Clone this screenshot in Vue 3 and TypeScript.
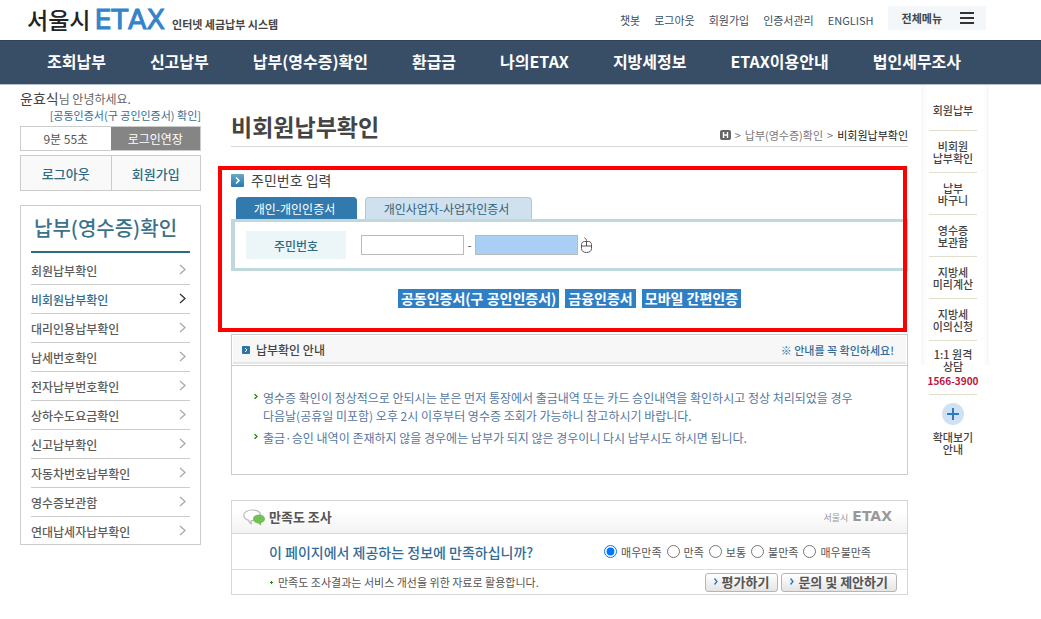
<script setup lang="ts">
import { ref } from 'vue'

const utilLinks = ['챗봇', '로그아웃', '회원가입', '인증서관리', 'ENGLISH']
const navItems = ['조회납부', '신고납부', '납부(영수증)확인', '환급금', '나의ETAX', '지방세정보', 'ETAX이용안내', '법인세무조사']
const sideItems = [
  '회원납부확인', '비회원납부확인', '대리인용납부확인', '납세번호확인', '전자납부번호확인',
  '상하수도요금확인', '신고납부확인', '자동차번호납부확인', '영수증보관함', '연대납세자납부확인',
]
const activeSide = '비회원납부확인'
const quickItems = ['회원납부', '비회원\n납부확인', '납부\n바구니', '영수증\n보관함', '지방세\n미리계산', '지방세\n이의신청']
const authButtons = ['공동인증서(구 공인인증서)', '금융인증서', '모바일 간편인증']
const ratings = ['매우만족', '만족', '보통', '불만족', '매우불만족']

const tab = ref<'personal' | 'business'>('personal')
const rating = ref('매우만족')
const front = ref('')
const back = ref('')
</script>

<template>
  <div class="page">
    <header class="top">
      <a class="logo" href="#">
        <span class="logo-city">서울시</span>
        <span class="logo-etax">ETAX</span>
        <span class="logo-sub">인터넷 세금납부 시스템</span>
      </a>
      <nav class="util" aria-label="사용자 메뉴">
        <a v-for="l in utilLinks" :key="l" href="#">{{ l }}</a>
        <button class="all-menu" type="button">
          전체메뉴
          <svg width="14" height="12" viewBox="0 0 14 12" aria-hidden="true"><path d="M0 1h14M0 6h14M0 11h14" stroke="#333" stroke-width="2" /></svg>
        </button>
      </nav>
    </header>

    <nav class="gnb" aria-label="주 메뉴">
      <a v-for="n in navItems" :key="n" href="#">{{ n }}</a>
    </nav>

    <div class="body">
      <aside class="side">
        <p class="greet"><strong>윤효식</strong>님 안녕하세요.</p>
        <a class="cert" href="#">[공동인증서(구 공인인증서) 확인]</a>
        <div class="timer">
          <span>9분 55초</span>
          <button type="button">로그인연장</button>
        </div>
        <div class="account">
          <button type="button">로그아웃</button>
          <button type="button">회원가입</button>
        </div>
        <nav class="lnb" aria-label="납부(영수증)확인">
          <h2>납부(영수증)확인</h2>
          <ul>
            <li v-for="s in sideItems" :key="s">
              <a href="#" :class="{ active: s === activeSide }">
                {{ s }}
                <svg width="7" height="11" viewBox="0 0 7 11" aria-hidden="true"><path d="M1 1l5 4.500-5 4.500" fill="none" stroke="currentColor" stroke-width="1.300" /></svg>
              </a>
            </li>
          </ul>
        </nav>
      </aside>

      <main class="main">
        <div class="title-row">
          <h1>비회원납부확인</h1>
          <div class="crumbs">
            <svg width="11" height="10" viewBox="0 0 11 10" aria-hidden="true"><rect width="11" height="10" rx="2" fill="#666" /><path d="M3.500 2v6M7.500 2v6M3.500 5h4" stroke="#fff" stroke-width="1.400" /></svg>
            <span>&gt;</span><a href="#">납부(영수증)확인</a><span>&gt;</span><b>비회원납부확인</b>
          </div>
        </div>

        <section class="auth">
          <h2 class="auth-head">
            <svg width="13" height="13" viewBox="0 0 13 13" aria-hidden="true">
              <defs><linearGradient id="bulletFill" x1="0" y1="0" x2="0" y2="1"><stop offset="0" stop-color="#66a9c9" /><stop offset="1" stop-color="#2d78a8" /></linearGradient></defs>
              <rect width="13" height="13" rx="1" fill="url(#bulletFill)" /><path d="M5 3.500l3 3-3 3" fill="none" stroke="#fff" stroke-width="1.600" />
            </svg>
            주민번호 입력
          </h2>
          <div class="tabs">
            <button type="button" :class="{ on: tab === 'personal' }" @click="tab = 'personal'">개인-개인인증서</button>
            <button type="button" class="wide" :class="{ on: tab === 'business' }" @click="tab = 'business'">개인사업자-사업자인증서</button>
          </div>
          <div class="field">
            <label for="rrn-front">주민번호</label>
            <input id="rrn-front" v-model="front" type="text" maxlength="6">
            <span class="dash">-</span>
            <input v-model="back" class="secure" type="password" maxlength="7" aria-label="주민번호 뒷자리">
            <svg class="mouse" width="13" height="17" viewBox="0 0 13 17" fill="none" stroke="#555" stroke-width="1" aria-hidden="true">
              <path d="M4.500 .5c.5 1.500 2 1 2 3V9M4.500 4.500h4c2 0 3 1.500 3 3v4c0 2.500-2 4-5 4s-5-1.500-5-4v-4c0-1.500 1-3 3-3zM1.500 9h10" />
            </svg>
          </div>
          <div class="auth-actions">
            <button v-for="b in authButtons" :key="b" type="button">{{ b }}</button>
          </div>
        </section>

        <section class="notice">
          <header>
            <h2>
              <svg width="8" height="8" viewBox="0 0 8 8" aria-hidden="true"><rect width="8" height="8" rx="1" fill="#2b76a8" /><path d="M3 2l2 2-2 2" fill="none" stroke="#fff" stroke-width="1" /></svg>
              납부확인 안내
            </h2>
            <strong>※ 안내를 꼭 확인하세요!</strong>
          </header>
          <ul>
            <li>
              <svg width="4" height="5" viewBox="0 0 4 5" aria-hidden="true"><path d="M.5 0L3 2.500 .5 5" fill="none" stroke="#2e8b12" stroke-width="1.400" /></svg>
              <span>영수증 확인이 정상적으로 안되시는 분은 먼저 통장에서 출금내역 또는 카드 승인내역을 확인하시고 정상 처리되었을 경우<br>다음날(공휴일 미포함) 오후 2시 이후부터 영수증 조회가 가능하니 참고하시기 바랍니다.</span>
            </li>
            <li>
              <svg width="4" height="5" viewBox="0 0 4 5" aria-hidden="true"><path d="M.5 0L3 2.500 .5 5" fill="none" stroke="#2e8b12" stroke-width="1.400" /></svg>
              <span>출금·승인 내역이 존재하지 않을 경우에는 납부가 되지 않은 경우이니 다시 납부시도 하시면 됩니다.</span>
            </li>
          </ul>
        </section>

        <section class="survey">
          <header>
            <h2>
              <svg width="22" height="17" viewBox="0 0 22 17" aria-hidden="true">
                <path d="M9 1C4.500 1 .8 3.200 .8 6.300c0 2.400 2.100 4.200 5 5-.1 1.500 1.500 3 3 3.700-1-1.300-1-2.300-.5-3.300C13 11.700 17.500 9.500 17.500 6S13.500 1 9 1z" fill="#fff" stroke="#bbb" stroke-width="1.200" />
                <path d="M16 5.500c-3.300 0-6 2-6 4.500s2.500 4.300 5.500 4.500c.8.800 1.800 1.800 2.800 2-.4-.9-.3-1.700 0-2.500 2.200-.7 3.700-2.200 3.700-4 0-2.500-2.700-4.500-6-4.500z" fill="#76c157" />
              </svg>
              만족도 조사
            </h2>
            <div class="mini-logo"><span>서울시</span><b>ETAX</b></div>
          </header>
          <fieldset>
            <legend>이 페이지에서 제공하는 정보에 만족하십니까?</legend>
            <div class="options">
              <label v-for="r in ratings" :key="r"><input v-model="rating" type="radio" name="rating" :value="r">{{ r }}</label>
            </div>
          </fieldset>
          <footer>
            <p>
              <svg width="3" height="3" viewBox="0 0 3 3" aria-hidden="true"><path d="M1.500 0v3M0 1.500h3" stroke="#2e8b12" /></svg>
              만족도 조사결과는 서비스 개선을 위한 자료로 활용합니다.
            </p>
            <div class="survey-actions">
              <button v-for="b in ['평가하기', '문의 및 제안하기']" :key="b" type="button">
                <svg width="4" height="7" viewBox="0 0 4 7" aria-hidden="true"><path d="M.5 .5l2.500 3-2.500 3" fill="none" stroke="#2b76a8" stroke-width="1.300" /></svg>{{ b }}
              </button>
            </div>
          </footer>
        </section>
      </main>

      <aside class="quick" aria-label="바로가기">
        <a v-for="q in quickItems" :key="q" href="#">{{ q }}</a>
        <a class="help" href="#"><span>{{ '1:1 원격\n상담' }}</span><em>1566-3900</em></a>
        <a class="zoom" href="#">
          <svg width="22" height="22" viewBox="0 0 22 22" aria-hidden="true"><circle cx="11" cy="11" r="11" fill="#cfe1f2" /><path d="M11 5v12M5 11h12" stroke="#2c7cc0" stroke-width="2" /></svg>
          <span>{{ '확대보기\n안내' }}</span>
        </a>
      </aside>
    </div>
  </div>
</template>

<style>
body {
  margin: 0;
  background: #fff;
}
</style>

<style scoped>
.page {
  font-family: "Noto Sans CJK KR", "Liberation Sans", sans-serif;
  font-size: 12px;
  line-height: 18px;
  color: #555;
}
.page *,
.page *::after {
  box-sizing: border-box;
}
a {
  color: inherit;
  text-decoration: none;
}
button,
input {
  font-family: inherit;
  margin: 0;
}
button {
  padding: 0;
  cursor: pointer;
}
h1,
h2,
p,
ul {
  margin: 0;
  padding: 0;
}
ul {
  list-style: none;
}
svg {
  flex: none;
}

.top {
  display: flex;
  justify-content: space-between;
  height: 40px;
  padding: 0 55px 0 27px;
}
.logo {
  display: flex;
  align-items: baseline;
  line-height: 38px;
  white-space: nowrap;
}
.logo-city {
  font-size: 23px;
  font-weight: 500;
  color: #222;
}
.logo-etax {
  margin: 0 7px 0 4px;
  font-family: "DejaVu Sans", sans-serif;
  font-size: 27px;
  font-kerning: none;
  color: #3584c8;
  -webkit-text-stroke: 1px #3584c8;
}
.logo-sub {
  font-size: 11px;
  font-weight: 700;
  color: #444;
}
.util {
  display: flex;
  align-items: center;
  gap: 14px;
  font-size: 11px;
  color: #3a4e66;
  white-space: nowrap;
}
.all-menu {
  display: flex;
  align-items: center;
  gap: 18px;
  height: 24px;
  margin-bottom: 4px;
  padding: 0 12px 0 14px;
  border: 0;
  background: #f4f7fa;
  font-size: 11px;
  font-weight: 700;
  color: #444;
}

.gnb {
  display: flex;
  align-items: center;
  gap: 44px;
  height: 45px;
  padding: 0 47px 4px;
  border-top: 1px solid #2f435b;
  border-bottom: 1px solid #b5bfca;
  background: #384d66;
  font-size: 16px;
  font-weight: 700;
  color: #fff;
  white-space: nowrap;
}

.body {
  display: flex;
  align-items: flex-start;
  padding: 0 52px 24px 20px;
}

.side {
  flex: none;
  width: 181px;
  padding-top: 4px;
}
.greet {
  color: #666;
}
.greet strong {
  font-size: 14px;
  font-weight: 400;
  color: #444;
}
.cert {
  display: block;
  height: 18px;
  line-height: 15px;
  text-align: right;
  font-size: 11px;
  color: #2f6d98;
  white-space: nowrap;
}
.timer,
.account {
  display: grid;
  grid-template-columns: 1fr 1fr;
  border: 1px solid #ccc;
}
.timer {
  height: 25px;
  text-align: center;
  line-height: 23px;
}
.timer button {
  border: 0;
  background: #858585;
  font-size: 12px;
  color: #fff;
}
.account {
  height: 36px;
  margin-top: 4px;
}
.account button {
  border: 0;
  background: #f9f9f9;
  font-size: 13px;
  font-weight: 500;
  color: #2d6b84;
}
.account button + button {
  border-left: 1px solid #ccc;
}
.lnb {
  margin-top: 14px;
  padding: 0 10px;
  border: 1px solid #ccc;
}
.lnb h2 {
  height: 47px;
  padding-left: 3px;
  border-bottom: 2px solid #2d6b84;
  line-height: 44px;
  font-size: 20px;
  font-weight: 500;
  color: #3b7288;
  white-space: nowrap;
}
.lnb ul {
  padding-top: 3px;
}
.lnb li {
  height: 29px;
  border-bottom: 1px solid #ccc;
}
.lnb li:last-child {
  height: 27px;
  border-bottom: 0;
}
.lnb a {
  display: flex;
  justify-content: space-between;
  padding: 6px 4px 0 0;
  font-weight: 500;
  color: #5c5c5c;
}
.lnb a svg {
  margin-top: 2px;
  color: #aaa;
}
.lnb a.active {
  color: #2f6d8f;
}
.lnb a.active svg {
  color: #333;
}

.main {
  flex: 1;
  min-width: 0;
  margin-left: 30px;
}
.title-row {
  display: flex;
  justify-content: space-between;
  align-items: flex-end;
  height: 62px;
  border-bottom: 1px solid #d8d8d8;
}
h1 {
  font-size: 23px;
  line-height: 40px;
  font-weight: 700;
  color: #444;
}
.crumbs {
  display: flex;
  align-items: center;
  gap: 4px;
  line-height: 22px;
  font-size: 11px;
  color: #777;
  white-space: nowrap;
}
.crumbs b {
  font-weight: 400;
  color: #222;
}

.auth {
  position: relative;
  height: 166px;
  margin-top: 19px;
  padding-top: 4px;
}
.auth::after {
  content: "";
  position: absolute;
  inset: 0 1px 0 -13px;
  border: 4px solid #f00;
  pointer-events: none;
}
.auth-head {
  display: flex;
  align-items: center;
  gap: 7px;
  height: 20px;
  font-size: 14px;
  font-weight: 400;
  color: #444;
}
.tabs {
  display: flex;
  gap: 8px;
  margin-top: 7px;
  padding-left: 5px;
}
.tabs button {
  width: 121px;
  height: 22px;
  padding-right: 4px;
  border: 1px solid #a9c9dc;
  border-bottom: 0;
  border-radius: 4px 4px 0 0;
  background: #cfe1ee;
  font-size: 12px;
  line-height: 22px;
  color: #35607a;
}
.tabs button.wide {
  width: 167px;
}
.tabs button.on {
  border-color: #3279ae;
  background: #3279ae;
  color: #fff;
}
.field {
  display: flex;
  align-items: center;
  height: 52px;
  padding-left: 11px;
  border: solid #bfd8dc;
  border-width: 3px 4px;
}
.field label {
  width: 100px;
  height: 28px;
  margin-right: 15px;
  background: #ecf5f8;
  text-align: center;
  line-height: 30px;
  font-weight: 500;
  color: #2d6b84;
}
.field input {
  width: 103px;
  height: 20px;
  padding: 0 4px;
  border: 1px solid #bbb;
  background: #fff;
  font-size: 12px;
}
.field input.secure {
  background: #a9cff5;
}
.dash {
  width: 11px;
  text-align: center;
}
.mouse {
  margin-left: 2px;
}
.auth-actions {
  display: flex;
  justify-content: center;
  gap: 6px;
  margin-top: 18px;
}
.auth-actions button {
  height: 19px;
  padding: 0 3px;
  border: 0;
  background: #2f7fc4;
  font-size: 14px;
  line-height: 17px;
  font-weight: 700;
  color: #fff;
  white-space: nowrap;
}

.notice {
  margin-top: 2px;
  border: 1px solid #ccc;
}
.notice header {
  display: flex;
  justify-content: space-between;
  align-items: center;
  height: 31px;
  padding: 0 13px 0 10px;
  border-bottom: 1px solid #ccc;
  background: #f7f7f7;
  box-shadow: inset 0 0 0 1px #fff, inset 0 -3px 0 #e6e6e6;
}
.notice h2 {
  display: flex;
  align-items: center;
  gap: 6px;
  font-size: 12px;
  font-weight: 500;
  color: #444;
}
.notice header strong {
  font-size: 11px;
  font-weight: 500;
  color: #2f6d98;
}
.notice ul {
  padding: 23px 20px 27px 22px;
}
.notice li {
  display: flex;
  gap: 5px;
  color: #55779f;
}
.notice li + li {
  margin-top: 4px;
}
.notice li svg {
  margin-top: 5px;
}

.survey {
  margin-top: 25px;
  border: 1px solid #d6d6d6;
}
.survey header {
  display: flex;
  justify-content: space-between;
  align-items: center;
  height: 33px;
  padding: 0 15px 0 11px;
  border-bottom: 1px solid #d6d6d6;
  background: linear-gradient(#fff 30%, #f3f3f3);
}
.survey h2 {
  display: flex;
  align-items: center;
  gap: 4px;
  font-size: 13px;
  font-weight: 700;
  color: #555;
}
.mini-logo {
  display: flex;
  align-items: baseline;
  gap: 4px;
  font-size: 9px;
  color: #999;
}
.mini-logo b {
  font-family: "DejaVu Sans", sans-serif;
  font-size: 14px;
}
fieldset {
  display: flex;
  justify-content: space-between;
  align-items: center;
  height: 36px;
  margin: 0;
  padding: 0 36px 0 37px;
  border: 0;
  border-bottom: 1px solid #ddd;
}
legend {
  float: left;
  padding: 0;
  line-height: 36px;
  font-size: 14px;
  font-weight: 500;
  color: #2f6d98;
}
.options {
  display: flex;
  gap: 5px;
  font-size: 11px;
}
.options label {
  display: flex;
  align-items: center;
  gap: 4px;
}
.options input {
  width: 13px;
  height: 13px;
}
.survey footer {
  display: flex;
  justify-content: space-between;
  align-items: center;
  height: 24px;
  padding: 0 10px 0 38px;
}
.survey footer p {
  display: flex;
  align-items: center;
  gap: 5px;
  font-size: 11px;
}
.survey-actions {
  display: flex;
  gap: 3px;
}
.survey-actions button {
  display: flex;
  align-items: center;
  gap: 4px;
  height: 19px;
  padding: 0 8px 1px;
  border: 1px solid #b5b5b5;
  border-radius: 3px;
  background: linear-gradient(#fff, #e4e4e4);
  font-size: 13px;
  line-height: 16px;
  font-weight: 700;
  color: #555;
}

.quick {
  display: flex;
  flex: none;
  flex-direction: column;
  width: 68px;
  margin-left: 13px;
  padding: 4px 12px 0 8px;
  background:
    linear-gradient(90deg, #f7f7f7, #fff 6px, #fff 62px, #f7f7f7) top / 100% 280px no-repeat;
  text-align: center;
  font-size: 11px;
  line-height: 12px;
  font-weight: 500;
  color: #444;
  white-space: pre-line;
}
.quick a {
  display: flex;
  flex-direction: column;
  justify-content: center;
  height: 42px;
  border-bottom: 1px solid #e0e0cc;
}
.quick a.help {
  height: 54px;
}
.help em {
  align-self: center;
  margin-top: 3px;
  font-size: 10px;
  font-style: normal;
  font-weight: 700;
  color: #c0143c;
  white-space: nowrap;
}
.quick a.zoom {
  align-items: center;
  justify-content: flex-start;
  height: auto;
  padding-top: 8px;
  border-bottom: 0;
}
.zoom svg {
  margin-bottom: 6px;
}
</style>
